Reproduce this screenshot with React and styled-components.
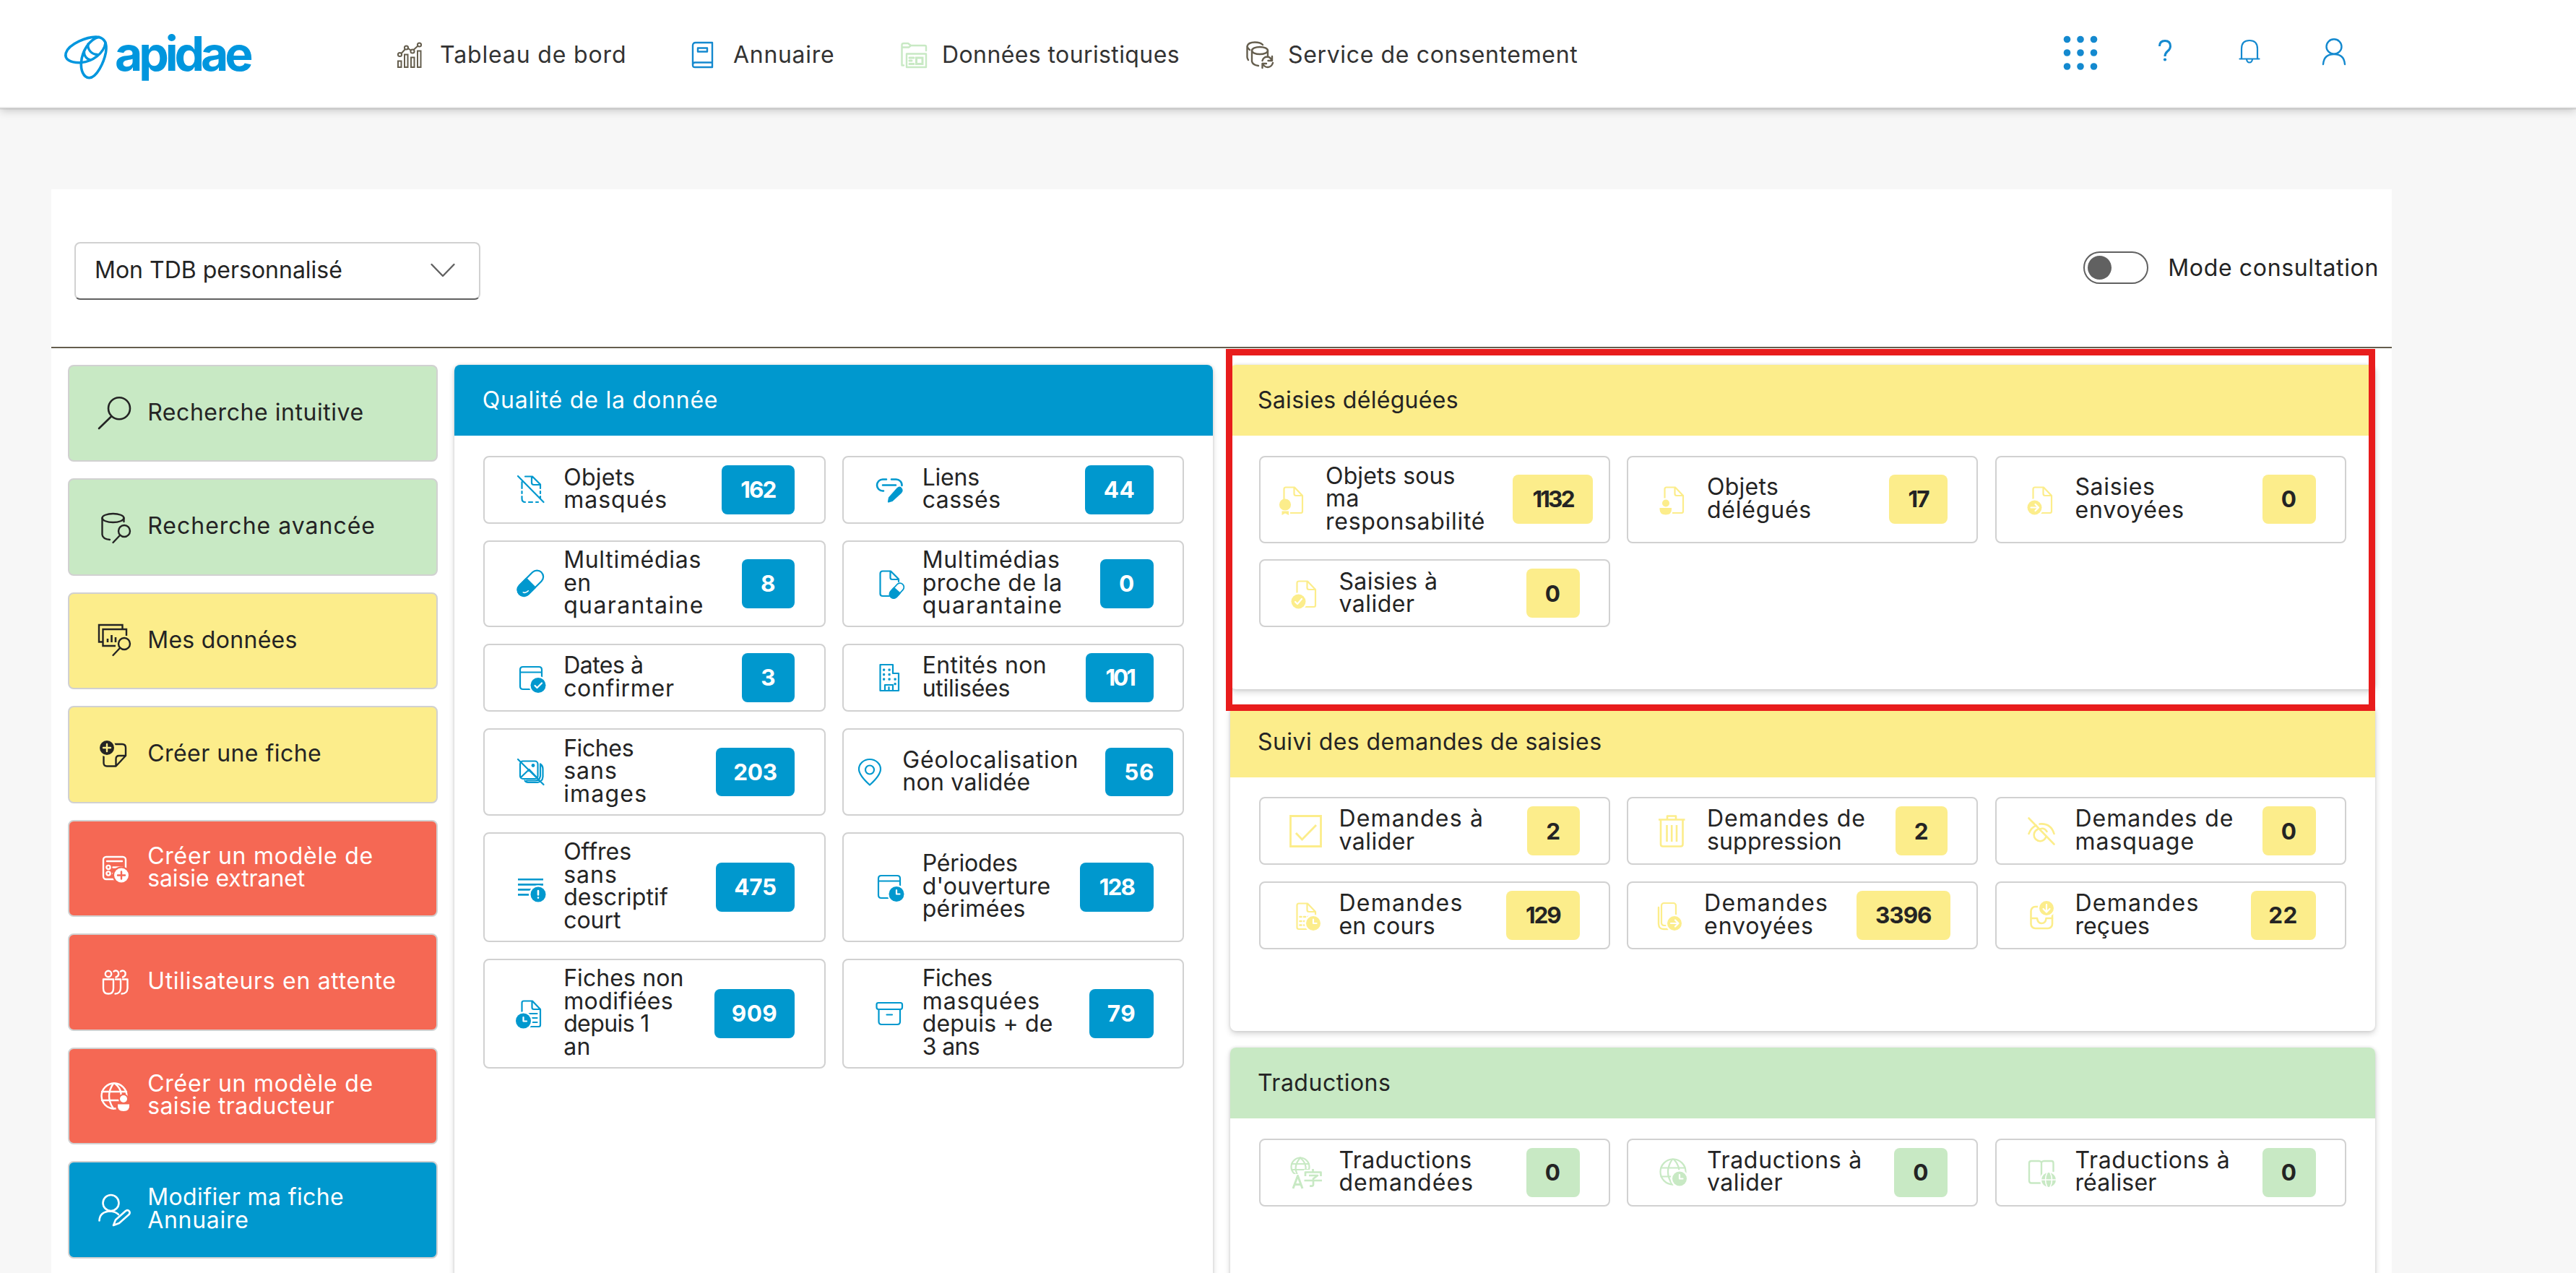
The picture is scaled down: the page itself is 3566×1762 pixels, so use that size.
import React from "react";
import styled, { createGlobalStyle } from "styled-components";

const C = {
  blue: "#0098ce",
  yellow: "#fced8b",
  green: "#c8e9c4",
  red: "#f56854",
  ink: "#242424",
  line: "#d1d1d1",
  taupe: "#655e4e",
  sky: "#1489cf",
};

const Global = createGlobalStyle`
  * { box-sizing: border-box; }
  body { margin: 0; background: #f7f7f7; }
`;

const Page = styled.div`
  height: 1762px;
  overflow: hidden;
  background: #f7f7f7;
  color: ${C.ink};
  font-family: Inter, "Open Sans", sans-serif;
  font-size: 32px;
  line-height: 31.5px;
`;

/* ---------- header ---------- */

const Header = styled.header`
  position: relative;
  display: flex;
  align-items: flex-start;
  height: 150px;
  background: #fff;
  border-bottom: 2px solid #e8e8e8;
  box-shadow: 0 1px 1px rgba(0, 0, 0, 0.14), 0 3px 12px rgba(0, 0, 0, 0.2);
`;

const Brand = styled.div`
  display: flex;
  flex: none;
  width: 549px;
  padding: 48px 0 0 88px;
`;

const BrandName = styled.span`
  margin: -9px 0 0 8px;
  color: #0096de;
  font-size: 66px;
  font-weight: 700;
  line-height: 70px;
  letter-spacing: -5.1px;
`;

const Nav = styled.nav`
  display: flex;
  padding-top: 56px;
`;

const NavItem = styled.a`
  display: flex;
  align-items: center;
  width: ${(p) => p.$w}px;
  height: 40px;
  gap: ${(p) => p.$gap}px;
  color: #333;
`;

const Tools = styled.div`
  display: grid;
  grid-template-columns: repeat(4, 117px);
  align-items: center;
  justify-items: center;
  margin-left: auto;
  padding: 49px 276.5px 0 0;
`;

/* ---------- toolbar ---------- */

const Panel = styled.main`
  width: 3240px;
  height: 1520px;
  margin: 112px 0 0 71px;
  background: #fff;
`;

const Toolbar = styled.div`
  display: flex;
  align-items: center;
  justify-content: space-between;
  height: 220px;
  padding: 0 18px 0 32px;
  border-bottom: 2px solid ${C.taupe};
`;

const Select = styled.div`
  display: flex;
  align-items: center;
  justify-content: space-between;
  width: 562px;
  height: 80px;
  margin-top: 7px;
  padding: 0 33px 2px 26px;
  border: 2px solid ${C.line};
  border-bottom-color: #616161;
  border-radius: 8px;
`;

const ModeSwitch = styled.div`
  display: flex;
  align-items: center;
  gap: 27px;
  margin-bottom: 1px;
`;

const Track = styled.span`
  display: flex;
  align-items: center;
  width: 90px;
  height: 45px;
  padding-left: 4px;
  border: 2px solid #616161;
  border-radius: 23px;
`;

const Knob = styled.span`
  width: 33px;
  height: 33px;
  border-radius: 50%;
  background: #616161;
`;

const Text = styled.span`
  white-space: nowrap;
  letter-spacing: ${(p) => p.$ls}px;
`;

/* ---------- dashboard ---------- */

const Board = styled.div`
  display: grid;
  grid-template-columns: 512px 1050px 1585.5px;
  column-gap: 23.25px;
  padding: 22.5px 0 0 23px;
`;

const TileList = styled.div`
  display: grid;
  grid-auto-rows: 134.5px;
  row-gap: 23px;
  align-content: start;
`;

const Tile = styled.button`
  display: flex;
  align-items: center;
  padding: 0 0 0 39.8px;
  border: 2px solid ${C.line};
  border-radius: 8px;
  background: ${(p) => p.$bg};
  color: ${(p) => p.$fg};
  font: inherit;
  text-align: left;
`;

const Stack = styled.div`
  display: grid;
  grid-auto-rows: 449.5px;
  row-gap: 23px;
  align-content: start;
`;

const Card = styled.section`
  position: relative;
  min-height: 100%;
  background: #fff;
  border-radius: 8px;
  box-shadow: 0 0 4px rgba(0, 0, 0, 0.12), 0 4px 8px rgba(0, 0, 0, 0.16);
`;

const CardHead = styled.h2`
  display: flex;
  align-items: center;
  height: 98.7px;
  margin: 0;
  padding: 0 38.5px;
  border-radius: 8px 8px 0 0;
  background: ${(p) => p.$bg};
  color: ${(p) => p.$fg};
  font-size: inherit;
  font-weight: 400;
`;

const Minis = styled.div`
  display: grid;
  grid-template-columns: repeat(${(p) => p.$cols}, 1fr);
  gap: 22.7px 23.4px;
  padding: 27.5px 40.2px;
`;

const Mini = styled.div`
  display: flex;
  align-items: center;
  min-height: 93.8px;
  padding: 11.2px ${(p) => p.$inset - 2}px;
  border: 2px solid ${C.line};
  border-radius: 8px;
`;

const Lines = styled.div`
  display: flex;
  flex: 1;
  flex-direction: column;
  margin: -1.3px 0 1.3px 23.4px;
`;

const Badge = styled.span`
  display: flex;
  flex: none;
  align-items: center;
  justify-content: center;
  width: ${(p) => p.$w}px;
  height: 67.8px;
  border-radius: 8px;
  background: ${(p) => p.$bg};
  color: ${(p) => p.$fg};
  font-size: 31.5px;
  font-weight: 650;
`;

const Highlight = styled.div`
  position: absolute;
  top: -22px;
  left: -6px;
  z-index: 2;
  width: 1591px;
  height: 501px;
  border: 9.5px solid #e81c1c;
`;

/* ---------- icons ---------- */

const Glyph = styled.svg`
  flex: none;
  display: block;
  overflow: visible;
  fill: none;
  stroke: currentColor;
  stroke-width: ${(p) => p.$sw || 2.2}px;
  stroke-linecap: round;
  stroke-linejoin: round;
  color: ${(p) => p.$c || "inherit"};
`;

const Icon = ({ c, sw, children }) => (
  <Glyph width="45" height="45" viewBox="0 0 45 45" $c={c} $sw={sw}>
    {children}
  </Glyph>
);

const Dot = ({ x, y, r = 10, bg = "#fff", children }) => (
  <>
    <circle cx={x} cy={y} r={r + 2.2} fill={bg} stroke="none" />
    <circle cx={x} cy={y} r={r} fill="currentColor" stroke="none" />
    <g stroke={bg}>{children}</g>
  </>
);

const clock = (x, y) => <path d={`M${x} ${y - 5}v5.5h4.5`} />;

const DocBase = () => (
  <path d="M13 41H34Q36 41 36 38.500V17L25 5.500H13Q10.500 5.500 10.500 8V38.500Q10.500 41 13 41ZM24.500 6V14.500Q24.500 17 27 17H35.500" />
);

const Cal = () => <path d="M34 38H12Q8 38 8 34V11Q8 7 12 7H34Q38 7 38 11V34Q38 38 34 38M8 14.500H38" />;

const I = {
  masked: () => (
    <path d="M10.500 21V12M15 4.500H25L36 15.500V21M24 5V13Q24 16 27 16H35.500M5 4L40.500 40M10.500 25v3M36 25v3M10.500 32v3Q10.500 40 15 40M20 40h5M30 40h3M36 32v2" />
  ),
  linkEdit: () => (
    <>
      <path d="M15 24.500H14A8 8 0 0 1 14 8.500H19M26 8.500H32A8 8 0 0 1 40.500 17M14 16.500H32" strokeWidth="2.6" />
      <path d="M39 20.500Q42 24 39 27L27 38L22 39.500L23 34L34.500 21Q37 18.500 39 20.500Z" fill="currentColor" />
    </>
  ),
  pill: () => (
    <g transform="rotate(-45 22.500 22.500)">
      <rect x="1" y="13.500" width="43" height="17.500" rx="8.700" />
      <path d="M9.700 13.500H23V31H9.700A8.700 8.700 0 0 1 9.700 13.500Z" fill="currentColor" />
      <path d="M6.500 24Q7.500 27.500 13 27.500" stroke="#fff" strokeWidth="1.600" />
    </g>
  ),
  docPill: () => (
    <>
      <path d="M23 40H14Q10.500 40 10.500 37V9Q10.500 5.500 14 5.500H25L36 16.500V20M24.500 6V14.500Q24.500 17 27 17H35.500" />
      <g transform="rotate(-48 33.500 32.500)">
        <rect x="21.500" y="27" width="24" height="11" rx="5.500" strokeWidth="1.800" />
        <path d="M27 27H33.500V38H27A5.500 5.500 0 0 1 27 27Z" fill="currentColor" />
      </g>
    </>
  ),
  calCheck: () => (
    <>
      <Cal />
      <Dot x={33} y={32.500} r={10.500}><path d="M28.500 33L31.500 36L38 29.500" /></Dot>
    </>
  ),
  calClock: () => (
    <>
      <Cal />
      <Dot x={33} y={32.500} r={10.500}>{clock(33, 32)}</Dot>
    </>
  ),
  building: () => (
    <>
      <path d="M10.500 40V4H28V16H36V40ZM17 40V32H28V40M22.500 35V40" />
      <g fill="currentColor" stroke="none">
        {[11, 17.500, 24].map((y) => [15.500, 23].map((x) => <rect key={x + "-" + y} x={x - 1.500} y={y - 1.500} width="3.200" height="3.200" rx="1" />))}
        <rect x="29.500" y="22.500" width="3.200" height="3.200" rx="1" />
        <rect x="29.500" y="29" width="3.200" height="3.200" rx="1" />
      </g>
    </>
  ),
  noImage: () => (
    <>
      <rect x="8" y="7.500" width="24.500" height="24.500" rx="4" />
      <path d="M9 30L20.500 19L31 30M36 11.500Q39.500 14 39.500 18V29Q39 36 32 37H19Q16 37 14.500 34.500M36 12V28Q35 34.500 29 34.500H17M5 5L40.500 40" />
      <circle cx="26" cy="13.500" r="2.400" fill="currentColor" stroke="none" />
    </>
  ),
  pin: () => (
    <>
      <path d="M23 40.500Q8 27 8 18.500A15 13.500 0 0 1 38 18.500Q38 27 23 40.500Z" />
      <circle cx="23" cy="19.500" r="6" />
    </>
  ),
  linesAlert: () => (
    <>
      <path d="M5 12.300H40M5 19.400H40M5 26.400H26M5 33.400H20" strokeWidth="2.600" strokeLinecap="butt" />
      <Dot x={33} y={33} r={10.500}><path d="M33 28V33.500M33 37.500V37.600" strokeWidth="2.600" /></Dot>
    </>
  ),
  docClock: () => (
    <>
      <DocBase />
      <path d="M20 23H31.500M22 29H31.500M24 35H31.500" />
      <Dot x={12.500} y={33} r={10.500}>{clock(12.500, 33)}</Dot>
    </>
  ),
  archive: () => (
    <path d="M8 8H38.500Q41 8 41 10.500V14Q41 17 38.500 17H8Q5.500 17 5.500 14V10.500Q5.500 8 8 8ZM8.500 17.500V34Q8.500 38 12.500 38H34Q38 38 38 34V17.500M19.500 24.500H27" />
  ),
  docSeal: () => (
    <>
      <DocBase />
      <rect x="1" y="23" width="18" height="22" fill="#fff" stroke="none" />
      <circle cx="12" cy="29.500" r="7" fill="currentColor" />
      <path d="M7.500 38.500V44L12 41.500L17 44V38.500Z" fill="currentColor" stroke="none" />
    </>
  ),
  docUser: () => (
    <>
      <DocBase />
      <rect x="2" y="20.500" width="19" height="23.500" fill="#fff" stroke="none" />
      <circle cx="12" cy="27.500" r="5" fill="currentColor" stroke="none" />
      <path d="M3.500 34H20V36Q20 43.500 12 43.500Q3.500 43.500 3.500 36Z" fill="currentColor" stroke="none" />
    </>
  ),
  docSend: () => (
    <>
      <DocBase />
      <Dot x={12.500} y={33.500} r={10}><path d="M7.500 33.500H17.500M13.500 29L18 33.500L13.500 38" /></Dot>
    </>
  ),
  docCheck: () => (
    <>
      <DocBase />
      <Dot x={12.500} y={33.500} r={10}><path d="M8 34L11 37L17 30" /></Dot>
    </>
  ),
  checkBox: () => (
    <path d="M1.500 1.500H43.500V43.500H1.500ZM9 25L17.500 34L37 14" strokeWidth="2.800" strokeLinecap="butt" strokeLinejoin="miter" />
  ),
  trash: () => (
    <path d="M2 6.500H38.500M14 6V1.500H26V6M5 7V40.500Q5 43.500 8 43.500H32.500Q35.500 43.500 35.500 40.500V7M13.500 14V37M20.200 14V37M27 14V37" strokeWidth="2.600" strokeLinecap="butt" />
  ),
  eyeOff: () => (
    <path d="M4.500 4.500L39.500 40.500M4.500 26Q8 17 15 14.500M19.500 12.500Q35 11 39.500 26M16.500 20A8.500 8.500 0 1 0 28 31M20 19.500Q26 17 29.500 23" strokeWidth="2.600" />
  ),
  listClock: () => (
    <>
      <DocBase />
      <path d="M14.500 24h2M20 24h2M25.500 24h2M14.500 30h2M20 30h2M14.500 35.500h2M20 35.500h2" strokeWidth="2.600" />
      <Dot x={33} y={33}>{clock(33, 32.500)}</Dot>
    </>
  ),
  copySend: () => (
    <>
      <rect x="9" y="5" width="20" height="31" rx="3.500" />
      <path d="M5 11V34Q5.500 41 12 41H18" strokeWidth="2.400" />
      <Dot x={27} y={33}><path d="M22 33H32M28 28.500L32.500 33L28 37.500" /></Dot>
    </>
  ),
  inbox: () => (
    <>
      <rect x="7.500" y="10" width="29.500" height="30" rx="6" strokeWidth="2.600" />
      <path d="M8 26H16Q17 33 22 33Q28 33 28.500 26H37" strokeWidth="2.600" />
      <Dot x={29} y={12}><path d="M29 7V17M24.500 13L29 17.500L33.500 13" /></Dot>
    </>
  ),
  translate: () => (
    <>
      <circle cx="15" cy="15" r="12.500" />
      <path d="M3 11H27M3 19H27M15 2.500Q4 15 12 27.500M15 2.500Q24 10 22.500 20" />
      <rect x="20" y="19" width="26" height="27" fill="#fff" stroke="none" />
      <rect x="3" y="25" width="18" height="21" fill="#fff" stroke="none" />
      <path d="M5 45L11.500 27.500L18 45M7 39.500H16" strokeWidth="3" strokeLinecap="butt" />
      <path d="M32.500 18V22.500M22 28V22.500H43.500V28M27 27H39L33 31.500V40Q33 42 28 41.500M20.500 34H45" strokeWidth="2.700" strokeLinecap="butt" />
    </>
  ),
  globeClock: () => (
    <>
      <circle cx="22" cy="22" r="17.500" />
      <path d="M5.500 16.500H38.500M5.500 28.500H38.500M21 4.500Q9 22 21 39.500M23 4.500Q32 14 30.500 26" />
      <Dot x={31} y={31.500}>{clock(31, 31)}</Dot>
    </>
  ),
  bookGlobe: () => (
    <>
      <path d="M22 9V36M22 9Q21 7 18.500 7H8Q5 7 5 10V34Q5 37.500 8 37.500H20M22 9Q23 7 25.500 7H36Q38.500 7 38.500 10V21" strokeWidth="2.400" />
      <circle cx="32" cy="33" r="12" fill="#fff" stroke="none" />
      <circle cx="32" cy="33" r="10" fill="currentColor" stroke="none" />
      <path d="M21 33H43M30 23Q25 33 30 43M34 23Q39 33 34 43" stroke="#fff" strokeWidth="1.600" />
    </>
  ),
  search: () => <path d="M44 16.300A15 15 0 1 1 14 16.300A15 15 0 1 1 44 16.300ZM18 27.500L1 44" strokeWidth="2.600" />,
  dbSearch: () => (
    <>
      <ellipse cx="20.500" cy="10" rx="15" ry="6" />
      <path d="M5.500 10V33Q6 39 16 40M35.500 10V15" />
      <circle cx="36" cy="28" r="8" />
      <path d="M30 34L20.500 44" />
    </>
  ),
  dataSearch: () => (
    <>
      <path d="M6 24.500H1V1H33.500V6M24 30H6.500V7H39V16" strokeLinejoin="miter" strokeLinecap="butt" />
      <path d="M13 25V20M18.500 25V15M24 25V18" strokeWidth="2.600" strokeLinecap="butt" />
      <circle cx="36" cy="27" r="8" />
      <path d="M30 33L20.500 43" />
    </>
  ),
  noteAdd: ({ bg }) => (
    <>
      <path d="M22 8H33Q38 8 38 13V24L24.500 38.500H12Q7.500 38.500 7.500 34V25M38 24H29Q24.500 24 24.500 28.500V38" />
      <Dot x={12} y={13} bg={bg}><path d="M12 8V18M7 13H17" /></Dot>
    </>
  ),
  formAdd: ({ bg }) => (
    <>
      <rect x="7" y="7" width="31" height="31" rx="4" />
      <path d="M12 13H33M20.500 21.500H33M20.500 30H24" />
      <circle cx="14" cy="21.500" r="2.600" />
      <circle cx="14" cy="30" r="2.600" />
      <Dot x={32} y={32.500} bg={bg}><path d="M32 27.500V37.500M27 32.500H37" /></Dot>
    </>
  ),
  users: () => (
    <>
      <circle cx="14" cy="11" r="4.200" />
      <path d="M7 18.500H21V31Q21 38.500 14 38.500Q7 38.500 7 31ZM21.500 7.500Q25.500 5 28 9Q29 14 24.500 15.500M31 7.500Q35 5 37.500 9Q38.500 14 34 15.500M24 18.500H31V31Q30.500 38.500 23.500 38.500M34 18.500H40.500V31Q40 38.500 32.500 38.500" />
    </>
  ),
  globeUser: ({ bg }) => (
    <>
      <circle cx="22" cy="23" r="17.500" />
      <path d="M5 17H39M5 29H30M21 5.500Q9 23 21 40.500M23 5.500Q32 13 31.500 21" />
      <circle cx="35" cy="27" r="7" fill={bg} stroke="none" />
      <rect x="24.500" y="32" width="21" height="13" rx="5" fill={bg} stroke="none" />
      <circle cx="35" cy="27" r="5" fill="currentColor" stroke="none" />
      <path d="M27 34.500H43Q44 44 35 44Q26 44 27 34.500Z" fill="currentColor" stroke="none" />
    </>
  ),
  userEdit: () => (
    <>
      <circle cx="17.500" cy="13" r="11" strokeWidth="2.600" />
      <path d="M1.500 37.500Q2 25 17 24.500Q24 25 28 29M21 44L24 36.500L38 24Q41 22 43 24.500Q44.500 27 42.500 29L29 41Z" strokeWidth="2.600" />
    </>
  ),
};

const Sym = ({ name, c, bg, sw }) => {
  const Art = I[name];
  return (
    <Icon c={c} sw={sw}>
      <Art bg={bg} />
    </Icon>
  );
};

const Logo = () => (
  <Glyph width="63" height="62" viewBox="0 0 63 62" $c="#0096de" $sw={3.6}>
    <path d="M24.500 38.700C9 39.500 1 34 3.200 25.500C7 13 33 2 47.500 3.200C57 4.500 60.500 12 58.500 24.500C56 38 46 59.500 35.500 59.800C27 59.500 23.500 48 24.500 38C25.500 24 35 6.500 49 3.300" />
    <path d="M24.500 38.700C40 37 56 26 58 11M34 13C33 20 38 27 46.500 27.500M28.500 23.500C28 29 32 34 37.500 35" strokeWidth="3.300" />
  </Glyph>
);

const ChartIcon = () => (
  <Glyph width="36" height="38" viewBox="0 0 36 38" $c={C.taupe} $sw={2}>
    <path d="M2 27.500H6.500V36H2ZM11 18.500H15.500V36H11ZM20 22.500H24.500V36H20ZM29 13.500H33.500V36H29ZM6.500 17L11.500 11.500M15.500 9.500L19.500 12.500M24 11.500L29.500 6.500" strokeLinejoin="miter" />
    <circle cx="4.500" cy="18.500" r="2.600" />
    <circle cx="13.500" cy="9" r="2.600" />
    <circle cx="22" cy="14" r="2.600" />
    <circle cx="31.500" cy="5" r="2.600" />
  </Glyph>
);

const BookIcon = () => (
  <Glyph width="32" height="38" viewBox="0 0 32 38" $c={C.sky} $sw={2.4}>
    <path d="M2 33V6Q2 2 6 2H29V36H5Q2 36 2 33Q2 29.500 5 29.500H29M9 9.500H22V14.500H9Z" />
  </Glyph>
);

const FolderIcon = () => (
  <Glyph width="38" height="38" viewBox="0 0 38 38" $c={C.green} $sw={2.4}>
    <path d="M5 33.500H2.500V5Q2.500 3 5 3H11L15 6H34.500Q36 6 36 8V13M2.500 8.500H12L15 6" />
    <path d="M9 17.500H36V36H9Z" />
    <path d="M13 23H19M13 27H16M13 31.500H19M22.500 23H31V31.500H22.500Z" strokeWidth="3" strokeLinejoin="miter" />
  </Glyph>
);

const ConsentIcon = () => (
  <Glyph width="38" height="38" viewBox="0 0 38 38" $c={C.taupe} $sw={2.4}>
    <path d="M3 26Q1.500 24 1.500 22V7M1.500 7Q3 1.500 12 1.500Q20 1.500 23 5M1.500 7Q2 10 5 12" />
    <ellipse cx="19" cy="13" rx="11" ry="5" />
    <path d="M8 13V28Q9 33 17 34M30 13V20M22.500 27Q24 22 29 21.500Q33 21.500 35.500 26M36 21V27H30.500M37 30Q35.500 35.500 30 36Q25.500 36 23 31.500M22.500 37V31H28" />
  </Glyph>
);

const GridIcon = () => (
  <Glyph width="48" height="48" viewBox="0 0 48 48" $c={C.sky}>
    {[5.500, 24, 43].map((y) =>
      [5.500, 24, 42.500].map((x) => <circle key={x + "-" + y} cx={x} cy={y} r="4.800" fill="currentColor" stroke="none" />)
    )}
  </Glyph>
);

const HelpIcon = () => (
  <Glyph width="22" height="45" viewBox="0 0 22 45" $c={C.sky} $sw={3}>
    <path d="M3.500 13Q3.500 5.500 11 5.500Q18.500 5.500 18.500 13Q18.500 17 14.500 20Q11 23 11 27" strokeLinecap="butt" />
    <circle cx="11" cy="31.500" r="2.100" fill="currentColor" stroke="none" />
  </Glyph>
);

const BellIcon = () => (
  <Glyph width="32" height="45" viewBox="0 0 32 45" $c={C.sky} $sw={2.2}>
    <path d="M5 30V16.500Q5 5 16 5Q27 5 27 16.500V30M2.500 30.500H29.500M12 31Q12.500 35.500 16 35.500Q19.500 35.500 20 31" />
  </Glyph>
);

const PersonIcon = () => (
  <Glyph width="36" height="45" viewBox="0 0 36 45" $c={C.sky} $sw={2.4}>
    <ellipse cx="18" cy="13.500" rx="10.500" ry="10.200" />
    <path d="M3 38Q4 24 18 24Q32 24 33 38" />
  </Glyph>
);

const Chevron = () => (
  <Glyph width="34" height="20" viewBox="0 0 34 20" $c="#616161" $sw={2.4}>
    <path d="M1.500 2L17 18L32.500 2" />
  </Glyph>
);

/* ---------- data ---------- */

const tracking = {
  "Tableau de bord": 0.85, "Données touristiques": 0.4, "Service de consentement": 0.65,
  "Mon TDB personnalisé": 0, "Mode consultation": 0.65,
  "Recherche intuitive": 0.55, "Recherche avancée": 1, "Mes données": 0.3, "Créer une fiche": 0.45,
  "Créer un modèle de": 0.75, "saisie extranet": -0.1, "Utilisateurs en attente": 0.68,
  "saisie traducteur": 0.4, "Modifier ma fiche": 0.4, Annuaire: 0.7,
  "Qualité de la donnée": 0.8, "Saisies déléguées": 0.3, "Suivi des demandes de saisies": 0.45,
  Objets: 0.3, "masqués": 1, Liens: -0.2, "cassés": 0.5, "Multimédias": 0.7, quarantaine: 1.4,
  "proche de la": 0.5, "Dates à": -0.5, confirmer: 0.7, "Entités non": 0.4, "utilisées": -0.25,
  Fiches: -0.4, sans: 1, images: 1.2, "Géolocalisation": 0.8, "non validée": 0.25, Offres: 0,
  descriptif: 0.15, court: 0, "Périodes": -0.2, "d'ouverture": 0.25, "périmées": 0.3,
  "Fiches non": 0.1, "modifiées": 0.4, "depuis 1": -0.6, "masquées": 1, "depuis + de": 0.2, "3 ans": -0.6,
  "Objets sous": 0.1, "responsabilité": 0.7, "délégués": 0.8, Saisies: 0.7, "Saisies à": 0.4,
  "envoyées": 0.9, "Demandes à": 1.2, "Demandes de": 1, suppression: 0.2, masquage: 1,
  Demandes: 1.3, "en cours": 0.2, "reçues": 0.1, "demandées": 1.1, "Traductions à": 0.7, "réaliser": 0.2,
  1132: -2.8, 17: -2, 162: -1.8, 101: -3, 128: -1.8, 129: -2, 3396: -1, 203: -0.3, 475: -0.3,
};

const T = ({ children, as }) => (
  <Text as={as} $ls={children in tracking ? tracking[children] : 0.5}>{children}</Text>
);

const nav = [
  [ChartIcon, "Tableau de bord", 408, 24],
  [BookIcon, "Annuaire", 289, 26],
  [FolderIcon, "Données touristiques", 479, 20],
  [ConsentIcon, "Service de consentement", 470, 20],
];

const tiles = [
  ["search", C.green, ["Recherche intuitive"]],
  ["dbSearch", C.green, ["Recherche avancée"]],
  ["dataSearch", C.yellow, ["Mes données"]],
  ["noteAdd", C.yellow, ["Créer une fiche"]],
  ["formAdd", C.red, ["Créer un modèle de", "saisie extranet"]],
  ["users", C.red, ["Utilisateurs en attente"]],
  ["globeUser", C.red, ["Créer un modèle de", "saisie traducteur"]],
  ["userEdit", C.blue, ["Modifier ma fiche", "Annuaire"]],
];

const quality = [
  ["masked", ["Objets", "masqués"], "162", 101.7],
  ["linkEdit", ["Liens", "cassés"], "44", 94.6],
  ["pill", ["Multimédias", "en", "quarantaine"], "8", 73.6],
  ["docPill", ["Multimédias", "proche de la", "quarantaine"], "0", 73.6],
  ["calCheck", ["Dates à", "confirmer"], "3", 73],
  ["building", ["Entités non", "utilisées"], "101", 93.3],
  ["noImage", ["Fiches", "sans", "images"], "203", 109.4],
  ["pin", ["Géolocalisation", "non validée"], "56", 94, 15],
  ["linesAlert", ["Offres", "sans", "descriptif", "court"], "475", 109.4],
  ["calClock", ["Périodes", "d'ouverture", "périmées"], "128", 101.7],
  ["docClock", ["Fiches non", "modifiées", "depuis 1", "an"], "909", 111.5],
  ["archive", ["Fiches", "masquées", "depuis + de", "3 ans"], "79", 88.4],
];

const delegated = [
  ["docSeal", ["Objets sous", "ma", "responsabilité"], "1132", 110.4, 24],
  ["docUser", ["Objets", "délégués"], "17", 81],
  ["docSend", ["Saisies", "envoyées"], "0", 74],
  ["docCheck", ["Saisies à", "valider"], "0", 74],
];

const requests = [
  ["checkBox", ["Demandes à", "valider"], "2", 72.2],
  ["trash", ["Demandes de", "suppression"], "2", 72.2],
  ["eyeOff", ["Demandes de", "masquage"], "0", 74],
  ["listClock", ["Demandes", "en cours"], "129", 101.3],
  ["copySend", ["Demandes", "envoyées"], "3396", 130, 38.5],
  ["inbox", ["Demandes", "reçues"], "22", 90],
];

const translations = [
  ["translate", ["Traductions", "demandées"], "0", 74],
  ["globeClock", ["Traductions à", "valider"], "0", 74],
  ["bookGlobe", ["Traductions à", "réaliser"], "0", 74],
];

const Label = ({ lines }) => (
  <Lines>
    {lines.map((t) => <T key={t}>{t}</T>)}
  </Lines>
);

const Widget = ({ title, color, fg = C.ink, cols, items, children }) => (
  <Card>
    <CardHead $bg={color} $fg={fg}><T>{title}</T></CardHead>
    <Minis $cols={cols}>
      {items.map(([icon, lines, count, w, inset = 42.300], i) => (
        <Mini key={i} $inset={inset}>
          <Sym name={icon} c={color} />
          <Label lines={lines} />
          <Badge $bg={color} $fg={fg} $w={w}><T>{count}</T></Badge>
        </Mini>
      ))}
    </Minis>
    {children}
  </Card>
);

export default function App() {
  return (
    <Page>
      <Global />
      <Header>
        <Brand>
          <Logo />
          <BrandName>apidae</BrandName>
        </Brand>
        <Nav>
          {nav.map(([Art, text, w, gap]) => (
            <NavItem key={text} $w={w} $gap={gap}>
              <Art />
              <T>{text}</T>
            </NavItem>
          ))}
        </Nav>
        <Tools>
          <GridIcon />
          <HelpIcon />
          <BellIcon />
          <PersonIcon />
        </Tools>
      </Header>
      <Panel>
        <Toolbar>
          <Select>
            <T>Mon TDB personnalisé</T>
            <Chevron />
          </Select>
          <ModeSwitch>
            <Track><Knob /></Track>
            <T>Mode consultation</T>
          </ModeSwitch>
        </Toolbar>
        <Board>
          <TileList>
            {tiles.map(([icon, bg, lines]) => (
              <Tile key={icon} $bg={bg} $fg={bg === C.red || bg === C.blue ? "#fff" : C.ink}>
                <Sym name={icon} bg={bg} sw={2.400} />
                <Label lines={lines} />
              </Tile>
            ))}
          </TileList>
          <Widget title="Qualité de la donnée" color={C.blue} fg="#fff" cols={2} items={quality} />
          <Stack>
            <Widget title="Saisies déléguées" color={C.yellow} cols={3} items={delegated}>
              <Highlight />
            </Widget>
            <Widget title="Suivi des demandes de saisies" color={C.yellow} cols={3} items={requests} />
            <Widget title="Traductions" color={C.green} cols={3} items={translations} />
          </Stack>
        </Board>
      </Panel>
    </Page>
  );
}
